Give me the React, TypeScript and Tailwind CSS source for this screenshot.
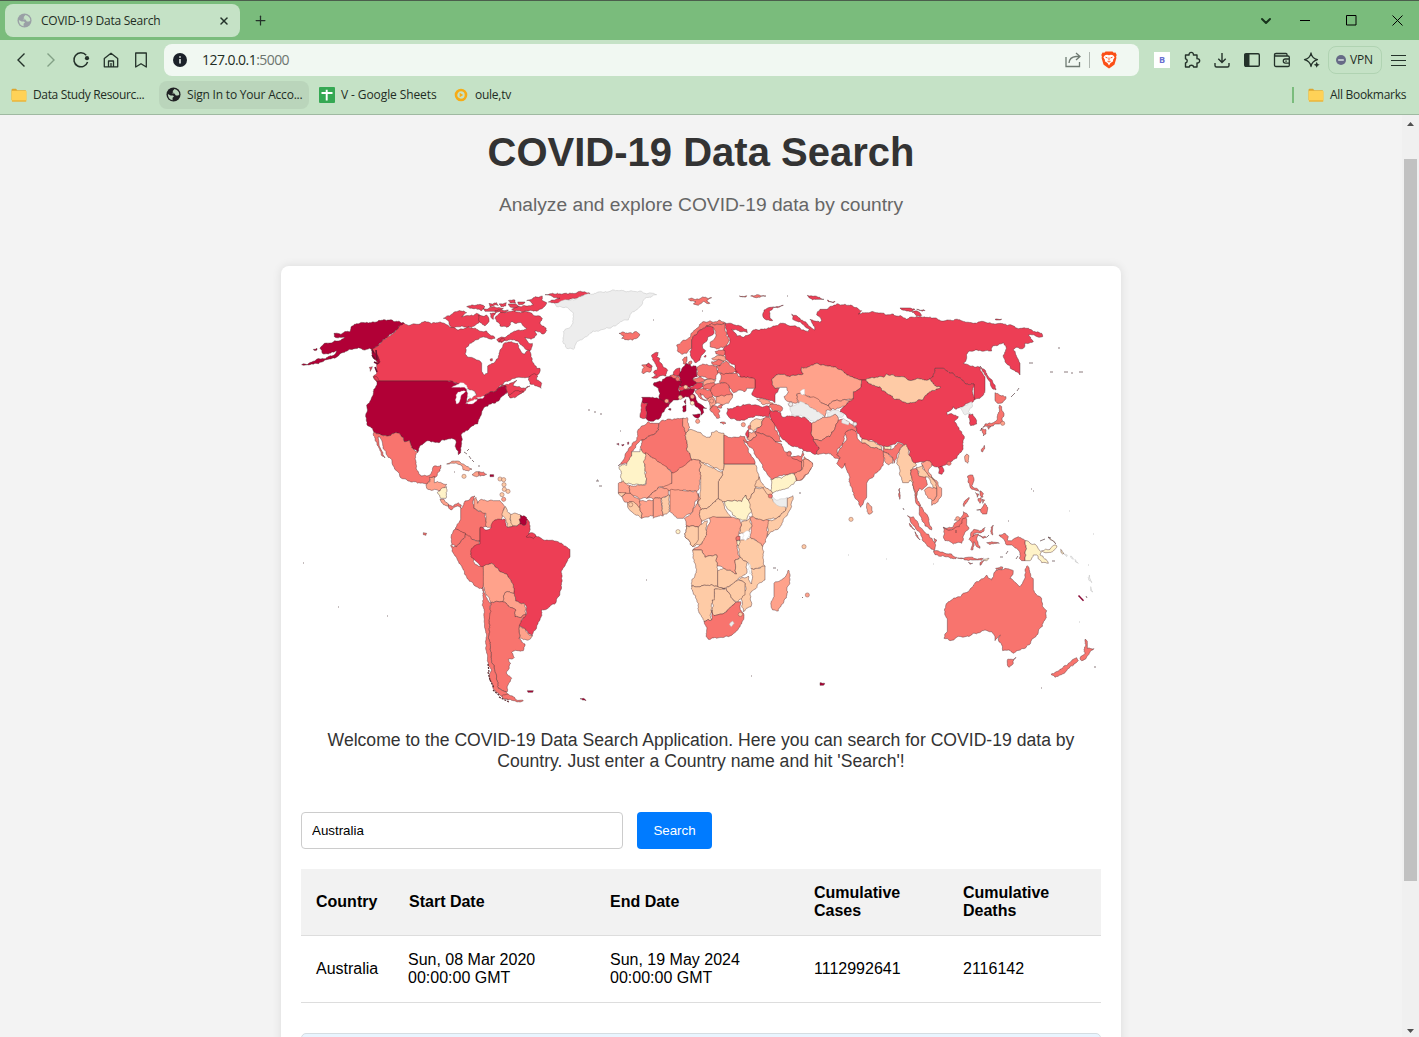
import React from 'react';
import { X, Plus, ChevronDown } from 'lucide-react';

const COLORS: Record<string, string> = {
  d: '#b10036', r: '#ed3e55', s: '#f8746e', l: '#ffa28b', p: '#fecba6', c: '#fff3c8', g: '#ededed', w: '#ffffff',
};

type Shape = [string, string];
type Pt = [number, number];

// Deterministic offset so that two countries sharing an edge get the same border.
function noise(a: Pt, b: Pt) {
  const v = Math.sin((a[0] + b[0]) * 12.9898 + (a[1] + b[1]) * 78.233) * 43758.5453;
  return (v - Math.floor(v)) * 2 - 1;
}
function roughen(a: Pt, b: Pt, out: Pt[]) {
  const len = Math.hypot(b[0] - a[0], b[1] - a[1]);
  if (len < 6 || a[0] === b[0] || a[1] === b[1]) {
    out.push(b);
    return;
  }
  const flip = a[0] < b[0] || (a[0] === b[0] && a[1] < b[1]) ? 1 : -1;
  const k = (noise(a, b) * Math.min(len * 0.18, 4) * flip) / len;
  const m: Pt = [(a[0] + b[0]) / 2 - (b[1] - a[1]) * k, (a[1] + b[1]) / 2 + (b[0] - a[0]) * k];
  roughen(a, m, out);
  roughen(m, b, out);
}
function toPath(src: string) {
  const pts = src.trim().split(/\s+/).map((p) => p.split(',').map(Number) as Pt);
  const out: Pt[] = [pts[0]];
  pts.forEach((p, i) => roughen(p, pts[(i + 1) % pts.length], out));
  return 'M' + out.map((p) => `${p[0].toFixed(1)},${p[1].toFixed(1)}`).join('L') + 'Z';
}

function Region({ x, y, shapes, dots = [] }: { x: number; y: number; shapes: Shape[]; dots?: [string, number, number][] }) {
  return (
    <g transform={`translate(${x} ${y}) scale(0.33333)`}>
      {shapes.map(([c, p], i) => (
        <path key={i} d={toPath(p)} fill={COLORS[c]} stroke={c === 'w' || c === 'g' ? '#bbb' : '#4d2c30'} strokeWidth={c === 'w' ? 1.2 : 1.5} strokeOpacity="0.85" strokeLinejoin="round" />
      ))}
      {dots.map(([c, cx, cy], i) => (
        <circle key={i} cx={cx} cy={cy} r="6.3" fill={COLORS[c]} stroke="#7a4a48" strokeWidth="1.3" />
      ))}
    </g>
  );
}

const northAmerica: Shape[] = [
  ['r', '230,207 327,129 345,136 360,132 400,126 410,131 440,128 465,142 490,150 520,138 550,150 575,153 585,165 600,175 560,172 540,180 525,190 512,205 510,222 525,232 545,240 560,250 560,270 568,285 578,280 578,258 595,250 610,235 612,220 620,205 630,188 650,185 668,190 672,205 680,218 690,222 705,208 708,230 712,245 725,265 735,265 728,285 700,292 660,295 630,305 610,325 650,308 665,300 655,318 690,325 705,318 687,335 665,345 645,352 640,345 633,318 620,320 605,332 570,345 540,360 515,370 520,358 545,345 540,335 525,330 500,312 480,308 455,303 245,303 235,290 245,280 245,240 232,215'],
  ['r', '600,115 615,98 640,95 700,97 712,102 742,115 735,130 755,152 745,162 720,153 725,165 708,178 690,172 700,188 712,190 705,212 692,208 680,195 670,185 640,180 620,188 605,180 625,172 640,165 670,150 695,145 680,130 650,125 635,142 615,138 605,125'],
  ['r', '445,115 480,95 515,98 500,110 545,100 562,112 552,128 530,142 500,138 470,142 462,125'],
  ['r', '515,80 545,75 570,80 560,92 535,86'],
  ['r', '582,70 605,68 610,76 585,80'],
  ['r', '565,85 590,82 625,85 600,94 570,94'],
  ['r', '640,62 660,60 662,70 645,68'],
  ['r', '695,62 720,50 742,48 740,60 755,68 748,80 720,92 690,93 650,88 680,80 715,74'],
  ['r', '750,44 810,40 868,35 885,40 860,46 815,60 780,70 760,66 795,54'],
  ['r', '550,106 575,105 582,125 570,138 556,128'],
  ['r', '585,100 602,98 595,118 588,112'],
  ['r', '640,72 660,72 670,80 648,82'],
  ['r', '668,66 690,66 685,72 670,73'],
  ['r', '612,72 634,68 632,78 618,80'],
  ['r', '600,92 640,90 625,97 602,98'],
  ['r', '618,176 630,178 622,186 612,184'],
  ['r', '705,288 715,282 728,288 725,300 740,310 738,325 725,318 705,312 700,300'],
  ['r', '640,345 665,332 685,333 670,345 645,354'],
  ['r', '586,237 592,236 592,242 587,243'],
  ['r', '235,290 245,290 260,305 258,312 246,306'],
  ['r', '223,262 232,260 226,274'],
  ['d', '327,129 300,125 265,119 215,127 168,141 165,155 117,160 118,170 150,172 130,183 88,190 75,205 82,220 100,222 125,212 110,228 60,243 20,254 60,250 100,238 130,228 160,210 190,203 215,208 232,207 240,220 255,245 250,252 235,235 230,208'],
  ['d', '55,208 66,205 66,210 57,211'],
  ['d', '245,303 455,303 480,310 500,315 515,330 520,345 515,370 540,360 570,345 605,332 620,320 633,318 635,340 620,350 600,370 570,380 560,400 550,420 548,432 520,450 498,465 500,490 497,518 490,524 483,505 482,480 470,475 440,480 435,487 400,482 375,497 368,517 355,508 345,482 328,485 315,463 270,466 237,456 232,445 218,437 212,410 215,375 235,340 243,318'],
  ['w', '470,322 495,308 515,316 517,328 490,322'],
  ['w', '485,372 481,360 483,345 500,333 512,335 499,345 495,360 490,370'],
  ['w', '515,332 538,336 542,346 530,356 518,350'],
  ['w', '512,370 530,362 547,358 540,366 520,372'],
  ['w', '545,353 568,348 565,354 550,356'],
  ['s', '237,456 270,466 315,463 328,485 345,482 355,508 369,516 360,537 363,564 378,588 405,585 417,558 438,555 435,573 423,591 405,597 399,612 375,609 348,606 315,591 306,573 291,543 273,519 264,504 255,471 249,471 252,492 270,534 261,528 255,512 246,495 240,480'],
];

const southAmerica: Shape[] = [
  ['l', '78,135 90,125 88,112 103,108 103,128 140,133 135,142 115,152 100,150 80,145'],
  ['c', '112,157 140,140 138,175 122,175'],
  ['l', '120,178 132,178 145,192 148,200 138,197 125,188'],
  ['s', '145,194 160,200 175,188 184,195 182,204 172,198 162,202 155,210 146,204'],
  ['l', '140,72 155,64 172,63 190,72 205,80 216,88 205,93 190,90 188,82 170,70'],
  ['l', '216,104 228,95 237,95 237,107 222,108'],
  ['s', '237,95 250,96 260,103 252,107 240,109'],
  ['d', '270,104 281,104 281,110 270,110'],
  ['s', '182,235 182,205 195,183 225,168 218,185 222,205 255,218 260,260 240,265 240,305 215,298 195,280 165,265'],
  ['l', '222,180 228,172 233,190 245,178 280,182 300,182 315,200 307,230 305,240 285,240 278,262 262,262 258,220 222,205'],
  ['p', '315,200 335,225 330,240 340,260 322,262 318,240 307,228'],
  ['p', '335,222 362,225 360,252 338,258 332,240'],
  ['d', '362,225 382,238 372,257 360,252'],
  ['s', '165,268 197,280 195,292 170,320 155,315 158,280'],
  ['s', '152,316 170,320 195,292 197,282 215,298 238,302 238,316 222,320 212,340 220,365 235,378 250,380 252,405 250,440 246,446 220,432 200,412 190,390 165,348'],
  ['r', '240,262 268,268 285,240 315,238 322,262 360,252 372,257 382,238 390,265 385,280 412,290 440,300 485,310 510,328 510,350 485,400 482,450 468,488 425,510 420,540 397,588 358,557 380,522 372,490 347,483 342,460 340,435 320,402 300,395 275,370 245,380 235,370 213,350 215,325 240,312'],
  ['r', '378,290 392,278 408,288 400,296 385,292'],
  ['l', '250,380 275,370 300,395 320,402 340,435 342,460 315,458 308,485 272,488 255,455 250,440'],
  ['l', '315,458 342,460 347,483 372,490 378,522 365,532 345,530 348,510 308,485'],
  ['l', '358,557 375,565 397,588 385,600 357,595'],
  ['s', '272,488 308,485 348,510 345,530 365,532 378,522 358,557 357,595 375,612 370,632 335,638 343,652 325,658 332,670 320,695 335,715 322,755 295,745 287,700 274,655 268,600 266,540'],
  ['s', '248,442 262,480 272,490 266,540 268,600 274,655 287,700 295,745 325,768 325,780 300,765 278,740 268,712 275,690 262,662 258,600 253,540'],
  ['s', '325,762 345,775 370,782 350,786 325,780 305,768'],
  ['d', '382,752 400,752 398,757 384,757'],
  ['d', '540,776 550,775 558,782 548,780'],
  ['s', '70,278 80,280 78,286 70,284'],
];

const europe: Shape[] = [
  ['g', '45,70 65,62 120,50 170,38 240,32 300,33 315,40 350,44 315,55 305,75 290,90 270,105 265,120 230,135 190,148 150,160 120,180 100,208 80,205 68,185 70,155 85,145 98,125 100,100 85,85 50,80'],
  ['s', '237,160 250,156 262,160 290,155 300,165 290,175 265,180 245,175 252,168'],
  ['s', '445,57 480,56 515,53 500,62 510,70 490,64 475,76 460,72 468,65 450,62'],
  ['s', '410,195 430,180 450,172 465,150 480,132 510,122 540,120 555,128 540,133 515,130 500,138 480,150 468,165 455,180 455,205 440,220 425,223 412,212'],
  ['r', '455,180 468,165 480,150 500,138 520,142 522,160 505,170 498,185 487,195 488,205 497,212 485,225 480,240 465,248 455,235 450,215 455,205'],
  ['s', '500,138 515,130 540,133 555,128 555,150 568,180 555,200 530,207 510,200 512,185 528,168 520,142'],
  ['s', '428,238 441,230 441,243 437,253 430,251'],
  ['s', '446,246 455,243 453,253 446,252'],
  ['s', '305,277 312,262 305,255 325,250 335,262 332,275 310,282'],
  ['r', '318,256 326,249 337,258 332,263'],
  ['r', '335,225 355,218 350,230 360,236 358,246 366,252 370,262 383,272 378,288 355,292 335,293 350,285 340,277 352,268 345,250 338,240'],
  ['d', '430,260 440,250 455,260 468,258 470,280 472,290 458,298 470,310 460,318 435,320 420,318 422,305 415,285 422,275'],
  ['d', '385,290 400,286 415,298 425,305 418,320 415,330 420,335 420,345 428,354 415,360 400,360 392,368 380,368 358,358 360,340 355,325 340,315 342,308 365,305 368,298'],
  ['r', '400,280 410,266 420,264 420,278 415,288 400,285'],
  ['s', '390,287 400,284 415,288 420,300 412,302 398,294'],
  ['d', '305,352 330,352 355,356 392,368 375,388 366,400 362,412 345,420 325,422 317,414 318,390 322,370 306,366'],
  ['r', '306,366 322,370 318,390 317,414 300,412 303,390'],
  ['r', '415,322 435,318 447,325 435,332 420,332'],
  ['d', '420,345 420,333 450,325 465,330 458,342 468,358 485,375 500,385 489,385 491,398 483,406 480,390 465,377 453,365 445,350 430,354'],
  ['d', '458,404 480,402 475,415 465,412'],
  ['d', '429,378 438,374 438,393 430,396'],
  ['d', '432,364 437,358 437,372'],
  ['d', '385,388 393,386 392,391'],
  ['r', '447,322 460,318 470,308 488,308 488,320 470,328 450,325'],
  ['s', '470,262 500,253 530,258 535,278 528,298 505,297 480,290 472,285'],
  ['s', '458,297 480,290 502,298 490,305 470,308'],
  ['l', '490,306 505,298 527,301 520,310 490,315'],
  ['s', '488,318 520,308 527,312 512,328 492,330'],
  ['s', '465,332 488,325 512,330 518,348 510,358 498,355 480,340 485,352 500,362 490,360 474,345'],
  ['l', '500,358 518,350 528,368 516,378 510,388 508,368'],
  ['s', '512,330 527,312 555,308 568,325 578,345 532,350 518,345'],
  ['l', '528,352 578,345 565,370 548,375 528,370'],
  ['s', '510,388 516,378 548,375 545,384 532,382 540,395 535,400 540,412 530,415 520,400'],
  ['s', '540,428 558,430 550,433'],
  ['s', '525,215 555,212 553,225 540,226 528,222'],
  ['l', '515,236 528,228 540,226 553,228 556,242 530,240'],
  ['s', '515,245 535,238 552,244 540,258 520,256'],
  ['s', '533,278 530,260 540,258 560,243 580,262 592,275 560,280'],
  ['r', '492,230 498,226 496,232'],
  ['d', '230,492 236,490 236,496'],
  ['d', '245,494 252,493 247,498'],
  ['d', '262,488 266,486 264,494'],
];

const asia: Shape[] = [
  ['r', '15,130 45,135 80,148 82,158 60,155 35,148 50,168 70,172 85,165 100,150 130,148 160,138 185,130 215,138 245,150 265,155 268,148 240,125 218,118 215,102 240,115 260,130 285,150 270,118 300,128 305,122 290,105 300,88 320,88 350,72 400,80 425,92 415,102 470,98 520,102 560,118 600,110 650,115 700,122 760,130 800,128 850,132 900,145 965,160 968,170 925,165 940,185 915,190 910,205 880,208 890,230 900,250 900,285 880,270 855,240 850,225 858,200 850,188 835,195 818,198 815,213 745,215 740,235 730,250 750,258 780,262 795,290 795,330 780,355 762,360 762,312 735,310 700,280 670,265 645,265 640,290 628,297 580,300 540,290 500,282 490,292 437,300 425,300 395,290 345,260 290,250 245,262 250,282 210,290 175,283 155,300 165,325 178,325 165,345 165,368 145,360 120,355 95,342 105,325 105,298 60,290 45,275 45,255 20,240 10,215 15,200 30,185 20,155'],
  ['r', '190,76 160,82 148,95 150,115 158,122 140,120 128,105 132,90 150,82'],
  ['r', '262,46 285,48 312,58 290,58 268,54'],
  ['r', '322,60 345,64 340,68 325,65'],
  ['r', '540,84 570,84 585,88 565,93 545,89'],
  ['r', '590,88 612,89 615,92 598,91'],
  ['r', '575,95 600,98 605,106 585,103'],
  ['r', '825,118 845,117 842,120 828,120'],
  ['s', '58,48 80,47 78,51 62,50'],
  ['s', '92,48 110,44 138,48 120,52 100,51'],
  ['r', '780,258 795,270 810,295 818,305 828,330 815,322 795,285'],
  ['r', '425,300 437,300 445,310 480,320 500,340 520,355 575,368 610,358 620,345 662,322 640,312 628,297 640,290 645,265 670,265 700,280 735,310 762,312 758,340 762,360 755,368 720,382 708,388 700,380 690,392 680,397 682,405 698,403 715,410 703,425 725,455 733,475 728,510 710,535 690,550 665,560 640,558 620,545 600,545 580,550 565,530 568,510 545,490 530,487 500,500 480,495 450,480 425,475 410,455 405,435 385,415 360,395 375,375 400,355 400,335 420,325'],
  ['p', '437,300 490,292 500,282 540,290 580,300 628,297 640,312 662,322 620,345 610,358 575,368 520,355 500,340 480,320 445,310'],
  ['l', '155,300 175,283 210,290 250,282 245,262 290,250 345,260 395,290 425,300 420,325 400,335 400,355 375,358 345,362 325,378 300,365 270,350 230,342 232,368 215,365 205,365 192,350 205,335 200,322 180,322 165,325'],
  ['l', '230,345 240,340 270,352 290,355 300,365 325,378 335,390 318,392 315,410 290,395 265,375 235,368'],
  ['w', '240,335 254,327 254,345 242,342'],
  ['l', '325,378 345,362 375,358 400,356 375,378 345,390 330,386'],
  ['g', '203,372 215,378 240,364 265,375 290,395 310,405 308,412 285,427 255,412 215,405 210,388'],
  ['g', '318,395 350,390 372,405 365,412 322,412'],
  ['l', '275,430 285,427 308,412 322,412 345,402 355,420 345,445 330,470 300,482 280,478'],
  ['r', '145,390 160,395 182,398 188,412 215,408 255,412 275,430 275,450 280,478 298,505 290,522 250,512 220,500 195,480 185,475 170,445 160,430 150,410'],
  ['r', '22,385 60,380 100,375 145,378 150,395 148,410 95,412 60,422 30,415 20,400'],
  ['l', '110,358 145,362 160,370 155,375 130,374'],
  ['s', '150,374 175,375 188,385 182,395 170,392 160,395 145,380'],
  ['s', '-1,280 50,280 60,290 105,298 105,325 80,325 75,335 60,330 40,338 25,315 0,310'],
  ['s', '355,420 372,418 390,430 410,445 408,455 385,450 372,480 352,508 362,540 350,535 325,520 290,522 298,505 280,478 300,482 330,470 345,445'],
  ['g', '370,415 388,425 385,435 365,428'],
  ['g', '720,382 755,365 758,378 745,395 752,402 735,405 728,395'],
  ['r', '747,403 758,402 768,418 770,432 752,437'],
  ['s', '825,338 840,346 858,350 855,360 838,370 825,362'],
  ['s', '838,376 845,380 852,400 848,428 838,432 825,432 812,440 795,438 788,442 795,432 820,428 832,415 835,400'],
  ['s', '785,444 797,448 798,462 790,468 787,455'],
  ['s', '802,440 812,440 806,448'],
];

const southAsia: Shape[] = [
  ['s', '50,105 60,85 80,60 75,40 95,28 110,38 112,55 125,68 150,80 185,90 190,95 190,82 215,88 235,68 250,75 240,90 230,115 222,130 216,112 192,96 190,135 165,160 140,190 140,230 122,262 105,235 90,190 78,145 75,130 65,145 50,130 60,112'],
  ['p', '125,57 145,62 185,80 185,90 150,80 125,68'],
  ['c', '192,77 213,78 213,86 193,87'],
  ['l', '190,95 205,100 218,112 218,130 205,135 195,125'],
  ['p', '230,130 235,110 242,85 258,72 265,100 275,118 290,135 272,150 275,170 285,195 292,220 288,235 280,200 270,180 265,188 248,188 240,150'],
  ['s', '272,150 288,145 295,162 318,170 322,195 305,210 298,205 290,225 292,242 302,258 296,258 286,240 285,215 275,170'],
  ['s', '298,258 310,270 322,285 328,312 335,330 315,318 305,295 298,275'],
  ['p', '288,142 310,135 308,147 320,155 345,185 350,205 340,205 332,188 318,170 295,165'],
  ['l', '305,128 330,123 336,138 325,155 350,182 365,205 365,225 355,240 335,256 335,242 350,228 350,200 340,180 318,155 310,140'],
  ['l', '313,212 325,202 350,205 350,228 338,242 325,235'],
  ['l', '434,115 440,102 445,105 443,130 436,125'],
  ['r', '355,143 365,138 371,148 366,163 356,160'],
  ['l', '142,248 155,260 158,275 145,282 140,265'],
  ['s', '262,287 280,290 295,310 325,342 345,370 343,392 325,380 305,350 285,320'],
  ['s', '340,393 360,396 375,400 395,402 410,412 408,416 375,410 345,404'],
  ['s', '412,414 435,413 465,416 490,415 485,421 440,420'],
  ['s', '445,427 458,430 450,433'],
  ['c', '490,420 507,415 500,422'],
  ['s', '480,428 492,422 480,436'],
  ['s', '370,322 380,328 400,326 416,308 428,290 440,296 440,310 447,325 436,335 425,370 400,372 375,362 372,345'],
  ['s', '370,322 400,320 415,303 430,275 446,290 428,296 418,320 400,328 382,330'],
  ['s', '452,340 462,328 485,332 495,322 490,335 462,340 458,350 475,342 470,360 480,385 470,380 462,365 458,390 452,388 455,365 447,358'],
  ['s', '513,322 520,315 518,345 512,335'],
  ['s', '500,368 515,365 538,370 510,374'],
  ['s', '475,345 500,352 490,355'],
  ['s', '443,168 458,165 462,182 455,198 470,205 478,215 465,210 450,200 444,185'],
  ['s', '466,218 476,222 472,232'], ['s', '480,212 490,220 488,232 480,226'], ['s', '474,236 484,232 480,250'], ['s', '486,238 494,240 488,250'],
  ['s', '470,270 485,265 495,250 503,262 500,282 488,282 482,270'],
  ['s', '430,256 447,232 443,244 432,260'],
  ['s', '537,345 555,340 565,350 562,360 575,362 595,350 617,362 615,422 605,422 598,415 600,400 575,375 560,375 552,358'],
  ['c', '617,362 645,372 665,395 660,405 685,430 665,428 650,405 640,405 630,422 615,422'],
  ['c', '665,392 690,388 705,375 711,378 700,393 675,398'],
  ['c', '684,352 700,362 708,372 698,362'],
  ['c', '722,388 732,400 728,402'],
  ['g', '732,402 742,405 740,410'], ['g', '752,408 760,418 752,412'], ['g', '765,418 775,430 766,425'],
  ['g', '808,465 815,488 806,480'], ['g', '812,500 819,516 814,514'],
  ['s', '385,545 400,535 445,515 460,498 480,480 500,465 515,480 522,458 535,448 555,445 580,452 570,475 600,500 612,480 615,450 622,437 632,470 640,480 640,510 660,530 668,560 680,572 675,600 655,635 635,660 615,685 582,700 565,690 548,692 543,670 535,660 541,645 525,662 525,650 515,635 495,630 460,640 435,650 410,652 390,662 372,655 382,635 382,600 375,575'],
  ['s', '527,445 548,441 546,448 530,449'],
  ['s', '563,718 588,712 580,730 568,742 562,735'],
  ['s', '795,658 802,668 802,685 822,686 808,700 785,722 780,715 795,700 792,688 798,675'],
  ['s', '770,713 775,722 750,740 740,752 705,772 693,763 720,748 745,730'],
  ['d', '0,788 14,790 10,796 0,796'],
  ['s', '236,210 240,205 239,238'], ['s', '268,310 285,330 278,326'], ['s', '285,335 300,360 294,355'],
  ['s', '484,94 493,76 488,96'], ['s', '342,355 350,360 345,368'],
];

const middleEast: Shape[] = [
  ['s', '145,245 160,250 178,250 176,270 125,300 95,335 85,372 55,378 75,345 110,300 112,275 135,255'],
  ['c', '57,380 80,376 95,348 95,335 120,335 120,326 140,345 136,432 62,434'],
  ['s', '178,250 205,237 250,235 248,258 258,280 260,330 275,360 298,365 215,400 140,345 122,325 125,300 176,270'],
  ['l', '248,235 262,233 270,262 258,280 248,258'],
  ['p', '258,280 270,268 292,276 330,292 334,278 348,272 372,280 372,390 300,362 275,360 260,330'],
  ['s', '372,285 410,292 435,290 445,312 430,300 465,372 372,372'],
  ['p', '457,242 470,236 492,235 486,255 460,275 450,265'],
  ['l', '445,278 465,275 470,285 450,302 442,298'],
  ['r', '440,275 446,268 446,290 441,295'],
  ['s', '486,255 492,235 508,232 525,255 525,270 538,288 545,305 525,305 495,285 465,275'],
  ['s', '440,305 450,302 470,285 465,275 495,285 525,305 545,312 555,335 575,350 605,365 605,385 590,398 560,405 530,412 515,418 490,385 465,345'],
  ['s', '575,353 603,350 608,333 612,345 605,368'],
  ['l', '605,392 605,365 612,350 620,358 638,370 625,400 605,420 588,422 582,402'],
];

const africa: Shape[] = [
  ['c', '542,118 575,115 605,100 612,102 620,122 580,148 548,160'],
  ['l', '620,122 612,100 635,90 642,58 668,72 655,100 635,118'],
  ['p', '403,73 495,73 508,115 495,145 475,180 467,165 455,185 430,182 402,185 385,175 385,125 397,95'],
  ['c', '402,185 430,182 455,185 467,165 475,180 485,215 470,242 440,235 420,212'],
  ['p', '330,62 397,95 385,125 385,175 345,205 330,210 322,185 332,150 332,110'],
  ['l', '245,98 310,58 330,62 332,110 320,155 280,150 245,155 215,140 245,130'],
  ['l', '166,38 245,98 245,130 205,142 170,175 150,178 120,160 118,137 168,133'],
  ['l', '85,130 100,122 118,137 120,160 100,165 85,158'],
  ['p', '85,158 108,158 100,165 95,170'],
  ['l', '95,170 105,160 120,160 148,178 150,205 132,200 125,185 112,188'],
  ['p', '112,188 125,185 150,205 155,235 130,220 115,205'],
  ['l', '148,183 190,180 190,228 155,235 150,205'],
  ['l', '170,175 205,142 235,150 235,165 215,175 190,178'],
  ['l', '190,178 215,175 220,228 190,235'],
  ['p', '215,175 240,165 238,215 220,225'],
  ['l', '240,150 280,152 320,153 325,175 308,215 280,235 262,235 240,215'],
  ['l', '325,160 332,175 322,190 335,210 328,225 335,258 288,255 283,235 308,215 325,180'],
  ['p', '330,210 345,205 385,175 402,195 425,232 380,232 355,235 335,245'],
  ['p', '495,145 520,142 545,165 550,185 588,205 560,235 520,242 485,230 475,180'],
  ['p', '495,140 508,110 520,135 548,160 540,165 520,142'],
  ['g', '545,170 555,178 592,172 592,200 575,200 550,185'],
  ['p', '592,200 592,175 608,167 600,210 570,260 532,290 530,245 560,235 588,205'],
  ['l', '478,230 520,242 537,240 530,290 518,320 480,290 485,260'],
  ['p', '455,245 470,242 480,235 485,260 478,275 448,282'],
  ['p', '445,305 460,300 480,292 518,320 525,380 480,385 470,365 450,350'],
  ['w', '460,278 475,272 478,285 466,302 458,295'],
  ['l', '358,235 380,232 425,232 450,240 455,255 445,285 440,300 450,350 435,360 440,402 400,385 382,378 380,345 345,352 335,330 308,330 330,315 350,285'],
  ['p', '288,258 325,262 352,242 350,285 335,312 308,320 285,290'],
  ['p', '288,258 325,262 325,300 308,320 285,290'],
  ['s', '438,292 450,288 450,300 440,302'],
  ['c', '440,302 450,302 445,318'],
  ['p', '308,330 335,330 345,352 380,345 382,378 383,395 383,440 305,438 318,385'],
  ['p', '383,392 400,385 440,402 435,360 450,352 472,368 470,400 430,430 405,445 383,440'],
  ['p', '480,385 525,378 525,420 480,460 483,500 460,515 455,480 465,430 445,420 475,408 485,432 488,410'],
  ['w', '474,365 482,385 480,402 476,385'],
  ['p', '408,445 430,430 445,420 465,430 465,465 445,485 425,475'],
  ['p', '373,447 408,445 425,475 437,487 410,515 372,527 366,510 367,480'],
  ['p', '305,438 383,440 405,445 373,447 373,480 366,480 365,540 342,545 325,500'],
  ['s', '342,545 365,540 366,510 372,527 410,515 437,487 452,485 455,515 462,525 450,560 415,590 380,595 355,598 350,570'],
  ['g', '418,552 428,543 433,550 424,560'],
  ['l', '595,390 600,420 580,490 565,513 548,510 543,485 552,470 552,430 575,420'],
];

const WorldMap = () => (
  <svg viewBox="301 286 800 425" className="block h-[425px] w-[800px]">
    <Region x={720} y={280} shapes={asia} dots={[['l', 70, 434], ['s', 90, 442], ['s', 208, 520], ['l', 848, 430], ['g', 405, 432], ['g', 212, 373]]} />
    <Region x={600} y={340} shapes={middleEast} />
    <Region x={590} y={440} shapes={africa} dots={[['c', 264, 275], ['p', 642, 320], ['l', 652, 465], ['s', 541, 168], ['p', 122, 194], ['p', 451, 523], ['s', 597, 42]]} />
    <Region x={295} y={280} shapes={northAmerica} />
    <Region x={400} y={440} shapes={southAmerica} dots={[['p', 192, 109], ['p', 300, 117], ['p', 311, 119], ['p', 312, 134], ['p', 313, 148], ['p', 324, 154], ['p', 306, 164], ['l', 311, 178]]} />
    <Region x={540} y={280} shapes={europe} dots={[['l', 380, 363], ['p', 421, 352], ['l', 457, 350], ['c', 457, 369], ['p', 437, 321], ['l', 473, 424], ['s', 413, 297], ['l', 515, 363]]} />
    <Region x={820} y={420} shapes={southAsia} dots={[['p', 93, 298], ['l', 413, 296], ['s', 387, 130]]} />
    {/* New Caledonia */}
    <path d="M1078.500 595.500l5 5.300" stroke="#8a0a36" strokeWidth="1.500" />
    {/* specks of remote islands */}
    <path
      d="M303 563h1M338 607h1M387 616h1M588 410h2M594 412h2M600 414h2M620 431h1M596 481h3M599 486h3M597 480h1M653 320h1M702 311h1M787 296h1M1058 348h2M1029 363h4M1050 372h3M1064 372h4M1071 373h2M1079 372h4M1017 391l2-3M1011 397l4-4M980 431l2-3M1033 491h1M1031 489h1M1008 521h1M773 568h3M802 598l1-1M777 570h1M1094 667h2M1041 688h1M751 676h1M799 493h2M646 580h1M464 452l3 2M469 456l2 3M472 460l2 2M454 472h1M903 508l1 2M954 520h2M956 530v3M1006 554l2-3M1016 559l2-3M1000 557h3M989 535l-2 2M467 451l2-2M478 466h2M1018 295M1040 541l5-2M1048 537l3 1M1052 561h3M1086 596l1 2"
      stroke="#4a3033"
      strokeOpacity="0.8"
      strokeWidth="0.8"
      fill="none"
    />
    <path d="M848 555h1M886 559h1M933 564h1M1069 511h1M1093 534h1M1079 622h1M1088 565h1" stroke="#bbb" strokeWidth="0.8" />
    <path d="M372 350l2 3M372 355l3 4M376 350l1 10M374 362l4 2M375 367l2 5" stroke="#6a1230" strokeWidth="1.600" fill="none" />
    <path d="M488 664l1 8M488 672l2 8M490 680l4 8M493 690l7 6M499 697l10 5" stroke="#5b2c30" strokeWidth="1.200" fill="none" strokeDasharray="2 1" />
  </svg>
);

const Folder = () => (
  <svg viewBox="0 0 16 14" className="h-[14px] w-4 shrink-0">
    <path d="M.5 2.200Q.5.8 1.700.8H5l1.300 1.400h7.700q1.200 0 1.200 1.200V12H.5z" fill="#dda62f" />
    <rect x=".6" y="2.800" width="14.900" height="10.600" rx="1" fill="#ffd257" />
    <path d="M1 13h14.200" stroke="#e0a62c" strokeWidth="1" />
  </svg>
);

const Globe = ({ color, hole }: { color: string; hole: string }) => (
  <svg viewBox="0 0 16 16" className="h-[15px] w-[15px] shrink-0">
    <circle cx="8" cy="8" r="7.5" fill={color} />
    <path d="M2 7.500 5 9h2.500l1 1.200-1.500 1.300v2.700Q2 13.200 2 7.500zM9 2.200 7 4.500l1 1-2 1.200 3 .3 1.500 2h2.500l1.200-1Q14 3.500 9 2.200z" fill={hole} />
  </svg>
);

const ic = 'text-[#24322a] shrink-0';

export default function App() {
  return (
    <div className="flex h-[1037px] w-[1419px] flex-col overflow-hidden bg-[#f3f3f3] font-['Liberation_Sans',Arial,sans-serif]">
      <div className="font-['Open_Sans','Noto_Sans',sans-serif] text-xs tracking-[-0.25px] text-[#1f2d24]">
        <div className="flex h-10 items-center border-t border-[#4b5d4c] bg-[#7abc7c] pl-[5px]">
          <div className="flex h-[33px] w-[235px] items-center rounded-[8px] bg-[#c5e2c6] pl-[12px] pr-[10px]">
            <Globe color="#9aa0a6" hole="#c5e2c6" />
            <span className="ml-[9px] flex-1 whitespace-nowrap">COVID-19 Data Search</span>
            <X size={12} strokeWidth={3} className={ic} />
          </div>
          <Plus size={15} strokeWidth={2} className={`ml-[13px] ${ic}`} />
          <div className="ml-auto flex items-center">
            <ChevronDown size={16} strokeWidth={3} className="mr-[26px] text-[#17331c]" />
            <svg className="h-[11px] w-[11px]" viewBox="0 0 11 11"><path d="M0 5.500h10" stroke="#000" /></svg>
            <svg className="ml-[35px] h-[11px] w-[11px]" viewBox="0 0 11 11"><path d="M.5.5h9.500v9.500H.5z" stroke="#000" fill="none" /></svg>
            <svg className="ml-[35px] mr-4 h-[11px] w-[11px]" viewBox="0 0 11 11"><path d="M.5.5l10 10M10.500.5l-10 10" stroke="#000" fill="none" /></svg>
          </div>
        </div>
        <div className="flex h-10 items-center bg-[#c5e2c6] pl-[11px] pr-[13px]">
          <div className="flex w-[153px] items-center gap-[10px]">
            <svg viewBox="0 0 20 20" className="h-5 w-5 shrink-0" fill="none" stroke="#24322a" strokeWidth="1.400"><path d="M13.500 3.500 7 10l6.500 6.500" /></svg>
            <svg viewBox="0 0 20 20" className="h-5 w-5 shrink-0" fill="none" stroke="#82a085" strokeWidth="1.400"><path d="M6.500 3.500 13 10l-6.500 6.500" /></svg>
            <svg viewBox="0 0 20 20" className="h-5 w-5 shrink-0">
              <path d="M15.200 5.200A7 7 0 1 0 16.600 12" fill="none" stroke="#24322a" strokeWidth="1.500" />
              <circle cx="16" cy="8.200" r="2.100" fill="#24322a" />
            </svg>
            <svg viewBox="0 0 20 20" className="h-5 w-5 shrink-0" fill="none" stroke="#24322a" strokeWidth="1.300">
              <path d="M3.300 8.500 10 3.200l6.700 5.300v8.300H3.300zM7.500 16.500V11h5v5.500M10 13v3.500" strokeLinejoin="round" />
            </svg>
            <svg viewBox="0 0 20 20" className="h-5 w-5 shrink-0" fill="none" stroke="#24322a" strokeWidth="1.300">
              <path d="M4.700 3h10.600v14L10 13.700 4.700 17z" strokeLinejoin="round" />
            </svg>
          </div>
          <div className="flex h-8 w-[975px] shrink-0 items-center rounded-[8px] bg-[#f1f8f2] pl-[9px] pr-[22px] text-sm tracking-[-0.55px]">
            <svg viewBox="0 0 14 14" className="h-[14px] w-[14px]">
              <circle cx="7" cy="7" r="7" fill="#1b2129" />
              <path d="M7 6v4.500M7 3.300v1.500" stroke="#f1f8f2" strokeWidth="1.500" />
            </svg>
            <span className="ml-[15px]">127.0.0.1<span className="text-[#6d756f]">:5000</span></span>
            <svg viewBox="0 0 18 18" className="ml-auto h-[18px] w-[18px]" fill="none" stroke="#6f7a72" strokeWidth="1.300">
              <path d="M2 6v9.500h13.500V11M5 12Q5.500 6 12 5.500h3.500M12 2l4 3.500L12 9" />
            </svg>
            <div className="ml-[7px] h-4 w-px bg-[#aeb6b0]" />
            <svg viewBox="0 0 16 18" className="ml-[11px] h-[18px] w-4">
              <path d="M4.500.5h7l1.200 1.300 1.800-.2 1.200 2.400-.6 1.500.3 1.600-1.900 6.300Q13 14 8 17.500 3 14 2.500 13.400L.6 7.100l.3-1.600L.3 4l1.200-2.400 1.800.2z" fill="#fb4f16" />
              <path d="M4 4.200 6 3.700l2 .5 2-.5 2 .5 1.600 2L12 9l.2 1.300-2.700 1.700L8 14.500 6.500 12l-2.700-1.700L4 9 2.400 6.200z" fill="#fff" />
              <path d="M4.500 6.200l2 .8M11.500 6.200l-2 .8M8 6.500v3M6.500 10.300 8 11l1.500-.7" stroke="#fb4f16" strokeWidth="1" fill="none" />
            </svg>
          </div>
          <div className="ml-[15px] flex h-4 w-4 items-center justify-center bg-white text-[9px] font-bold text-[#6a6fd0]">B</div>
          <div className="ml-auto flex items-center">
            <svg viewBox="0 0 18 18" className="h-[18px] w-[18px]" fill="none" stroke="#24322a" strokeWidth="1.400" strokeLinejoin="round">
              <path d="M2.500 4h3.600a2.200 2.200 0 1 1 4.300 0H14v3.700a2.200 2.200 0 1 1 0 4.300v4h-3.300a2.300 2.300 0 0 0-4.500 0H2.500v-4a2.200 2.200 0 0 0 0-4.300z" />
            </svg>
            <svg viewBox="0 0 18 18" className="ml-3 h-[18px] w-[18px]" fill="none" stroke="#24322a" strokeWidth="1.400">
              <path d="M9 2v9M5.300 7.700 9 11.400l3.700-3.700M2 12v2.500q0 1.500 1.500 1.500h11q1.500 0 1.500-1.500V12" />
            </svg>
            <svg viewBox="0 0 16 14" className="ml-[13px] h-[14px] w-4"><rect x=".7" y=".7" width="14.600" height="12.600" rx="1.200" fill="none" stroke="#24322a" strokeWidth="1.400" /><path d="M1 1h4.500v12H1z" fill="#24322a" /></svg>
            <svg viewBox="0 0 18 18" className="ml-[13px] h-[18px] w-[18px]" fill="none" stroke="#24322a" strokeWidth="1.300">
              <path d="M14 5V3.500q0-1-1-1H3q-1.500 0-1.500 1.200T3 5h12q1.300 0 1.300 1.300v7.900q0 1.300-1.300 1.300H3q-1.500 0-1.500-1.500V3.800M16.300 8h-4q-2 0-2 2.100t2 2.100h4zM12.300 10.100h1.500" />
            </svg>
            <svg viewBox="0 0 18 18" className="ml-3 h-[18px] w-[18px]">
              <path d="M8 2q.9 5.300 6.500 6.700Q8.900 10.200 8 15.500 7.100 10.200 1.500 8.700 7.100 7.300 8 2z" fill="none" stroke="#24322a" strokeWidth="1.300" strokeLinejoin="round" />
              <path d="M13.700 10.700q.4 2.600 3 3-2.600.4-3 3-.4-2.600-3-3 2.600-.4 3-3z" fill="#24322a" />
            </svg>
            <div className="ml-[7px] flex h-7 w-[54px] items-center rounded-[8px] border border-[#b0d3b2] pl-[7px] tracking-[-0.2px]">
              <svg viewBox="0 0 10 10" className="mr-1 h-[10px] w-[10px]"><circle cx="5" cy="5" r="5" fill="#666a86" /><path d="M2.200 5h5.600" stroke="#d8e4e2" strokeWidth="1.500" /></svg>
              VPN
            </div>
            <svg viewBox="0 0 15 13" className="ml-[9px] h-[13px] w-[15px]"><path d="M0 1.500h15M0 6.500h15M0 11.500h15" stroke="#24322a" strokeWidth="1.200" /></svg>
          </div>
        </div>
        <div className="flex h-[35px] items-center border-b border-[#9fb9a1] bg-[#c5e2c6] pb-[5px] pl-[11px] pr-[14px] whitespace-nowrap">
          <Folder />
          <span className="ml-[6px] w-[111px] tracking-[-0.35px]">Data Study Resourc...</span>
          <div className="ml-[15px] flex h-7 w-[150px] items-center rounded-[8px] bg-[#bad5bb] pl-[7px]">
            <Globe color="#202124" hole="#bad5bb" />
            <span className="ml-[6px] tracking-[-0.2px]">Sign In to Your Acco...</span>
          </div>
          <svg viewBox="0 0 16 16" className="ml-[10px] h-4 w-4"><rect width="16" height="16" rx="1" fill="#35a853" /><path d="M2.500 6h11M7.700 2.800v10.700" stroke="#fff" strokeWidth="1.900" /></svg>
          <span className="ml-[6px] w-[96px] tracking-[-0.1px]">V - Google Sheets</span>
          <svg viewBox="0 0 14 14" className="ml-[17px] h-[14px] w-[14px]"><circle cx="7" cy="7" r="5" fill="none" stroke="#f6ac16" strokeWidth="2.600" /><path d="M5.700 4.700v4.600L9.200 7z" fill="#f6ac16" /></svg>
          <span className="ml-[7px]">oule,tv</span>
          <div className="ml-auto h-4 w-[2px] bg-[#7abc7c]" />
          <div className="ml-[14px] mr-[6px]"><Folder /></div>
          <span className="w-[75px] tracking-[-0.3px]">All Bookmarks</span>
        </div>
      </div>

      <div className="flex min-h-0 flex-1">
        <main className="flex w-[1402px] shrink-0 flex-col items-center">
          <h1 className="mt-[13px] text-[40px] leading-[48px] font-bold text-[#333]">COVID-19 Data Search</h1>
          <p className="mt-[18px] text-[19.2px] leading-[22px] text-[#666]">Analyze and explore COVID-19 data by country</p>
          <section className="mt-[50px] w-[840px] shrink-0 rounded-[8px] bg-white px-5 pt-5 shadow-[0_0_10px_rgba(0,0,0,0.1)]">
            <WorldMap />
            <p className="mt-[19px] px-5 text-center text-[17.6px] leading-[21px] text-[#333]">
              Welcome to the COVID-19 Data Search Application. Here you can search for COVID-19 data by<br />Country. Just enter a Country name and hit 'Search'!
            </p>
            <form className="mt-10 flex gap-[14px]" onSubmit={(e) => e.preventDefault()}>
              <input defaultValue="Australia" className="h-[37px] w-[322px] rounded-[4px] border border-[#ccc] px-[10px] text-[13.333px] text-black" />
              <button className="h-[37px] w-[75px] rounded-[4px] bg-[#007bff] text-[13.333px] text-white">Search</button>
            </form>
            <table className="mt-5 w-[800px] table-fixed border-collapse text-left text-base leading-[18px] text-black">
              <thead>
                <tr className="h-[66px] border-b border-[#ddd] bg-[#f2f2f2]">
                  <th className="w-[93px] px-[15px]">Country</th>
                  <th className="w-[201px] px-[15px]">Start Date</th>
                  <th className="w-[204px] px-[15px]">End Date</th>
                  <th className="w-[149px] px-[15px]">Cumulative Cases</th>
                  <th className="px-[15px]">Cumulative Deaths</th>
                </tr>
              </thead>
              <tbody>
                <tr className="h-[67px] border-b border-[#ddd]">
                  <td className="pl-[15px]">Australia</td>
                  <td className="pr-[15px] pl-[14px]">Sun, 08 Mar 2020<br />00:00:00 GMT</td>
                  <td className="px-[15px]">Sun, 19 May 2024<br />00:00:00 GMT</td>
                  <td className="px-[15px]">1112992641</td>
                  <td className="px-[15px]">2116142</td>
                </tr>
              </tbody>
            </table>
            <div className="mt-[30px] h-[60px] rounded-[5px] border border-[#d5dde2] bg-[#e9f5ff]" />
          </section>
        </main>
        <aside className="flex w-[17px] flex-col items-center bg-[#f0f0f0] pb-[4px] pt-[7px]">
          <svg viewBox="0 0 7 4" className="h-1 w-[7px]"><path d="M0 4 3.500 0 7 4z" fill="#505050" /></svg>
          <div className="mt-[33px] h-[722px] w-[13px] bg-[#c1c1c1]" />
          <svg viewBox="0 0 7 4" className="mt-auto h-1 w-[7px]"><path d="M0 0h7L3.500 4z" fill="#505050" /></svg>
        </aside>
      </div>
    </div>
  );
}
